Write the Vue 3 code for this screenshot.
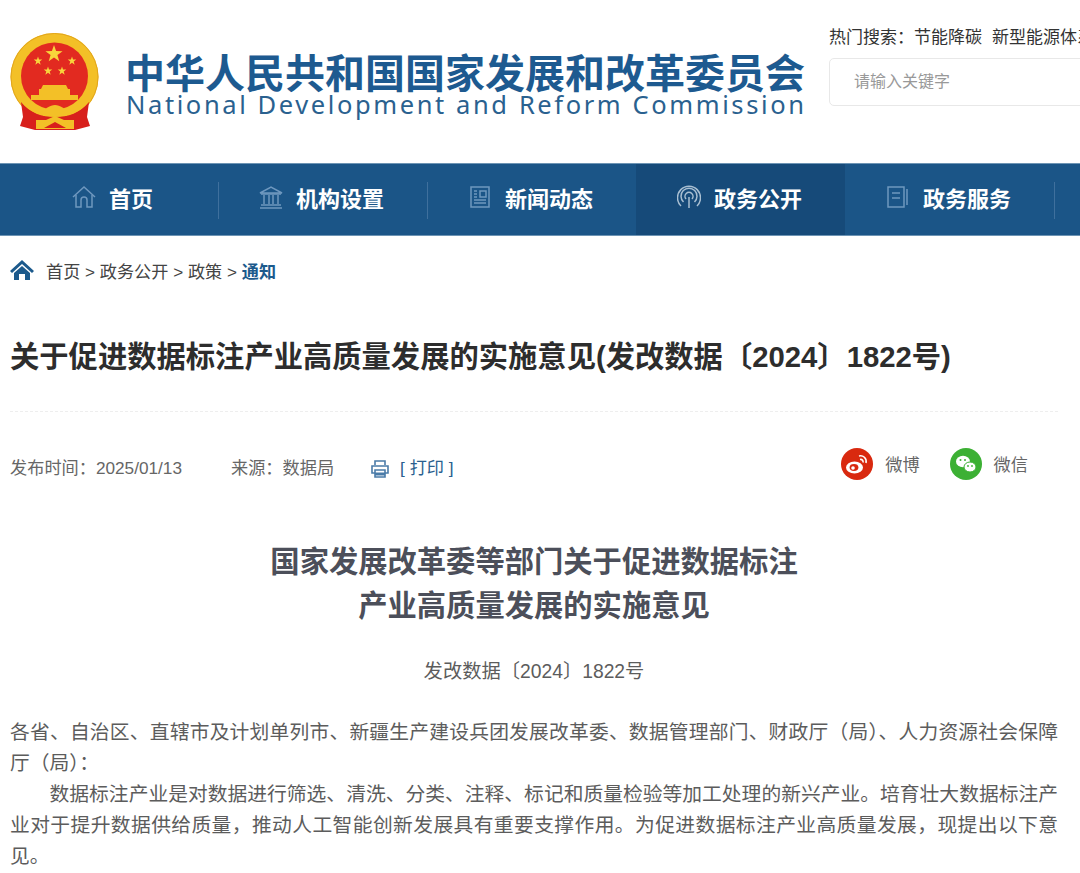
<template>
  <div class="page">
    <!-- HEADER -->
    <header class="header">
      <div class="logo">
        <svg class="emblem" viewBox="0 0 90 98" width="90" height="98">
          <circle cx="44.500" cy="44" r="44" fill="#f3c027" />
          <circle cx="44.500" cy="44" r="43.500" fill="none" stroke="#e2a51c" stroke-width="1" />
          <circle cx="44.500" cy="43" r="33.500" fill="#e22a20" />
          <polygon :points="star(44, 21, 9)" fill="#f8d53c" />
          <polygon :points="star(28, 28, 4.5)" fill="#f8d53c" />
          <polygon :points="star(62, 28, 4.5)" fill="#f8d53c" />
          <polygon :points="star(38, 38, 4.5)" fill="#f8d53c" />
          <polygon :points="star(52, 38, 4.5)" fill="#f8d53c" />
          <path d="M33 52h23l2 4h2v6h8v5H21v-5h8v-6h2z" fill="#f3c027" />
          <path d="M11 69C20 80 32 84 45 84S70 80 79 69L77 84l3 9-15 4H25l-15-4 3-9z" fill="#d8201c" />
          <path d="M14 68C22 78 34 81 45 81S68 78 76 68" fill="none" stroke="#f3c027" stroke-width="5" />
          <path d="M30 80c5-4 10-8 15-8s10 4 15 8l-4 3H34z" fill="#f3c027" />
          <path d="M26 87h10l9-4 9 4h10v9H26z" fill="#f3c027" />
          <path d="M34 95l11-6 11 6z" fill="#d8201c" />
        </svg>
        <div class="logo-text">
          <div class="logo-cn">中华人民共和国国家发展和改革委员会</div>
          <div class="logo-en">National Development and Reform Commission</div>
        </div>
      </div>
      <div class="search">
        <div class="hot">
          <span>热门搜索：</span>
          <span class="hot-word">节能降碳</span>
          <span class="hot-word">新型能源体系</span>
        </div>
        <input class="search-input" placeholder="请输入关键字" />
      </div>
    </header>

    <!-- NAV -->
    <nav class="nav">
      <a v-for="item in navItems" :key="item.label" class="nav-item" :class="{ active: item.active }">
        <svg class="nav-icon" viewBox="0 0 24 24" width="24" height="24" fill="none" stroke-width="1.5">
          <path v-for="(d, i) in item.paths" :key="i" :d="d" />
        </svg>
        <span>{{ item.label }}</span>
      </a>
    </nav>

    <!-- BREADCRUMB -->
    <div class="crumb">
      <svg class="crumb-icon" viewBox="0 0 24 20" width="24" height="20">
        <path d="M12 0L0 11l2 2L12 4l10 9 2-2z" fill="#1c5a8c" />
        <path d="M4 13l8-7 8 7v7h-5v-6H9v6H4z" fill="#1c5a8c" />
      </svg>
      <span>首页 &gt; 政务公开 &gt; 政策 &gt; </span>
      <b>通知</b>
    </div>

    <h1 class="title">关于促进数据标注产业高质量发展的实施意见(发改数据〔2024〕1822号)</h1>

    <div class="meta">
      <div class="meta-left">
        <span class="date">发布时间：2025/01/13</span>
        <span class="source">来源：数据局</span>
        <svg class="print-icon" viewBox="0 0 20 20" width="20" height="20" fill="none" stroke="#4a7ba8" stroke-width="1.6">
          <path d="M5 6V2h10v4" />
          <path d="M5 14H2V7h16v7h-3" />
          <path d="M5 11h10v7H5z" />
          <path d="M5 15h10" stroke-width="3" />
        </svg>
        <span class="print">[ 打印 ]</span>
      </div>
      <div class="share">
        <svg class="share-icon" viewBox="0 0 32 32" width="32" height="32">
          <circle cx="16" cy="16" r="16" fill="#d9290f" />
          <ellipse cx="13.500" cy="19.500" rx="8.500" ry="6" fill="#fff" />
          <ellipse cx="13" cy="19.500" rx="4.400" ry="3.400" fill="#d9290f" />
          <circle cx="12" cy="20" r="1.800" fill="#fff" />
          <path d="M18 8c4-1 8 2 7 7M19 11.500c2-.5 3.500 1 3 3" fill="none" stroke="#fff" stroke-width="1.600" />
        </svg>
        <span class="share-label">微博</span>
        <svg class="share-icon" viewBox="0 0 32 32" width="32" height="32">
          <circle cx="16" cy="16" r="16" fill="#3cb034" />
          <ellipse cx="13" cy="13.500" rx="7" ry="5.800" fill="#fff" />
          <ellipse cx="20" cy="19" rx="6" ry="5" fill="#fff" stroke="#3cb034" stroke-width="1" />
          <circle cx="10.500" cy="12" r="1" fill="#3cb034" />
          <circle cx="15" cy="12" r="1" fill="#3cb034" />
          <circle cx="18" cy="18" r=".9" fill="#3cb034" />
          <circle cx="22" cy="18" r=".9" fill="#3cb034" />
        </svg>
        <span class="share-label">微信</span>
      </div>
    </div>

    <!-- ARTICLE -->
    <article class="article">
      <h2 class="article-title">国家发展改革委等部门关于促进数据标注<br />产业高质量发展的实施意见</h2>
      <div class="doc-no">发改数据〔2024〕1822号</div>
      <p>各省、自治区、直辖市及计划单列市、新疆生产建设兵团发展改革委、数据管理部门、财政厅（局）、人力资源社会保障厅（局）：</p>
      <p class="indent">数据标注产业是对数据进行筛选、清洗、分类、注释、标记和质量检验等加工处理的新兴产业。培育壮大数据标注产业对于提升数据供给质量，推动人工智能创新发展具有重要支撑作用。为促进数据标注产业高质量发展，现提出以下意见。</p>
    </article>
  </div>
</template>

<script setup>
const navItems = [
  {
    label: "首页",
    paths: ["M1 12L12 2l11 10", "M4 10v12h5v-7a3 3 0 0 1 6 0v7h5V10"],
  },
  {
    label: "机构设置",
    paths: ["M1 8l11-6 11 6z", "M2 9h20", "M5 10v9M10 10v9M14 10v9M19 10v9", "M2 20h20M1 23h22"],
  },
  {
    label: "新闻动态",
    paths: ["M3 2h18v20H3z", "M12 6h6v6h-6z", "M6 6h3M6 9h3M6 12h3M6 15h12M6 18h12"],
  },
  {
    label: "政务公开",
    active: true,
    paths: ["M12 12v11", "M6.500 17a8 8 0 1 1 11 0", "M4 21a11.500 11.500 0 1 1 16 0", "M9 14a4 4 0 1 1 6 0"],
  },
  {
    label: "政务服务",
    paths: ["M2 2h16v20H2z", "M6 8h8M6 13h8", "M21 4v16"],
  },
];

// five-pointed star as polygon points
function star(cx, cy, r) {
  const pts = [];
  for (let i = 0; i < 10; i++) {
    const rad = i % 2 ? r * 0.4 : r;
    const a = (Math.PI / 5) * i - Math.PI / 2;
    pts.push(`${(cx + rad * Math.cos(a)).toFixed(2)},${(cy + rad * Math.sin(a)).toFixed(2)}`);
  }
  return pts.join(" ");
}
</script>

<style>
html,
body {
  overflow: hidden;
  background: #fff;
}
</style>

<style scoped>
.page {
  width: 1080px;
  height: 873px;
  overflow: hidden;
  font-family: "Liberation Sans", "Noto Sans CJK SC", sans-serif;
  color: #444;
}

.header {
  height: 163px;
  display: flex;
  padding: 25px 0 0 10px;
  box-sizing: border-box;
}

.logo {
  width: 819px;
  flex: none;
  display: flex;
  padding-top: 8px;
}

.logo-text {
  margin-left: 26px;
  padding-top: 18px;
}

.logo-cn {
  font-family: "Noto Sans CJK SC", sans-serif;
  font-size: 40px;
  line-height: 40px;
  margin-left: -1px;
  font-weight: 700;
  color: #1d5a90;
  white-space: nowrap;
}

.logo-en {
  font-family: "Noto Sans", sans-serif;
  font-size: 25.500px;
  line-height: 26px;
  letter-spacing: 2.600px;
  color: #2a618f;
  white-space: nowrap;
}

.search {
  flex: none;
  width: 300px;
  padding-top: 2px;
}

.hot {
  font-size: 17px;
  line-height: 22px;
  color: #333;
  white-space: nowrap;
}

.hot-word {
  margin-right: 10px;
}

.search-input {
  display: block;
  width: 300px;
  height: 48px;
  margin-top: 9px;
  padding: 0 24px;
  box-sizing: border-box;
  border: 1px solid #e8e8e8;
  border-radius: 5px;
  font-family: inherit;
  font-size: 16px;
  outline: none;
}

.search-input::placeholder {
  color: #999;
}

.nav {
  height: 73px;
  padding-left: 9px;
  display: flex;
  background: #1b5587;
  border-top: 1px solid #6d94b4;
  border-bottom: 1px solid #6d94b4;
  box-sizing: border-box;
}

.nav-item {
  position: relative;
  width: 209px;
  padding: 0 2px 5px 0;
  box-sizing: border-box;
  display: flex;
  align-items: center;
  justify-content: center;
  gap: 13px;
  color: #fff;
  font-size: 22px;
  font-weight: 700;
  font-family: "Noto Sans CJK SC", sans-serif;
}

.nav-icon {
  stroke: #6f98bf;
}

.nav-item::after {
  content: "";
  position: absolute;
  right: -1px;
  top: 18px;
  height: 37px;
  width: 1px;
  background: #3f709d;
}

.nav-item.active {
  background: #164a79;
}

.nav-item.active .nav-icon {
  stroke: #a9bfd2;
}

.nav-item.active::after {
  display: none;
}

.crumb {
  height: 36px;
  margin-top: 16px;
  padding-left: 10px;
  display: flex;
  align-items: center;
  font-size: 17.150px;
  color: #444;
  white-space: pre;
}

.crumb-icon {
  margin-right: 12px;
}

.crumb b {
  color: #1c5a8c;
}

.title {
  margin: 49px 0 0 10px;
  width: 1048px;
  padding-bottom: 34px;
  border-bottom: 1px dashed #eee;
  font-size: 29.300px;
  line-height: 40px;
  font-weight: 700;
  color: #2d2d2d;
  white-space: nowrap;
}

.meta {
  display: flex;
  justify-content: space-between;
  padding: 34px 52px 0 10px;
  font-size: 17.200px;
}

.meta-left {
  display: flex;
  align-items: center;
  height: 40px;
  color: #666;
}

.source {
  margin-left: 49px;
}

.print-icon {
  margin: 5px 0 0 36px;
}

.print {
  margin-left: 10px;
  color: #2a5f8f;
}

.share {
  display: flex;
  align-items: center;
  height: 32px;
  margin-top: 2px;
  color: #666;
}

.share-label {
  margin: -2px 30px 0 12px;
}

.share-label:last-child {
  margin-right: 0;
}

.article {
  margin-top: 54px;
  padding: 0 22px 0 10px;
  font-size: 19.770px;
  line-height: 31px;
  color: #5c5c5c;
}

.article-title {
  margin: 0;
  font-size: 29.300px;
  line-height: 44px;
  font-weight: 700;
  text-align: center;
  color: #4c4f5a;
}

.doc-no {
  margin-top: 29px;
  text-align: center;
  font-size: 19.300px;
  line-height: 30px;
}

.article p {
  margin: 0;
  text-align: justify;
}

.doc-no + p {
  margin-top: 30px;
}

.indent {
  text-indent: 2em;
}
</style>
